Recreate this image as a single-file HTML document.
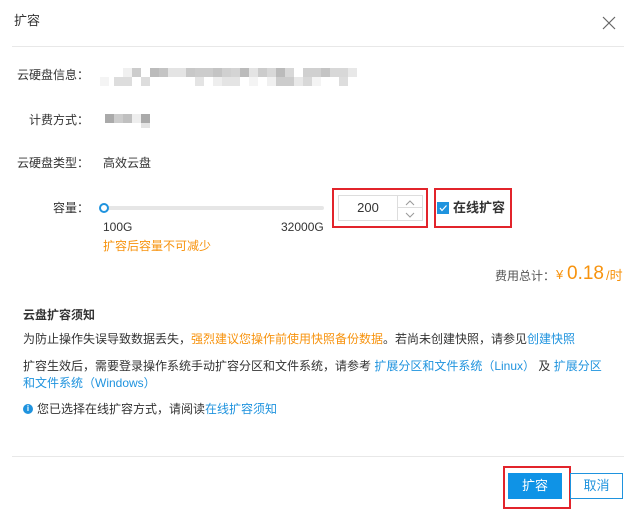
<!DOCTYPE html>
<html><head><meta charset="utf-8"><style>
*{margin:0;padding:0;box-sizing:border-box}
body{width:636px;height:514px;background:#fff;position:relative;overflow:hidden;font-family:"Liberation Sans","Noto Sans CJK SC",sans-serif;font-size:12px;color:#333}
.a{position:absolute;white-space:nowrap;line-height:16px}
.lbl{text-align:right;width:89px;left:0;color:#333}
.px{position:absolute;width:9px;height:9px}
.o{color:#f7930e}.b{color:#1f93de}
</style></head><body>
<div class="a" style="left:14px;top:13px;font-size:13px">扩容</div>
<svg class="a" style="left:602px;top:16px" width="14" height="14" viewBox="0 0 14 14"><path d="M1 1L13 13M13 1L1 13" stroke="#666" stroke-width="1.2"/></svg>
<div class="a" style="left:12px;top:46px;width:612px;height:1px;background:#e8e8e8"></div>

<div class="a lbl" style="top:67px">云硬盘信息：</div>
<div class="px" style="left:123px;top:68px;background:#f0f0f0"></div><div class="px" style="left:132px;top:68px;background:#ccc"></div><div class="px" style="left:150px;top:68px;background:#bbb"></div><div class="px" style="left:159px;top:68px;background:#c4c4c4"></div><div class="px" style="left:168px;top:68px;background:#e4e4e4"></div><div class="px" style="left:177px;top:68px;background:#e4e4e4"></div><div class="px" style="left:186px;top:68px;background:#c8c8c8"></div><div class="px" style="left:195px;top:68px;background:#ccc"></div><div class="px" style="left:204px;top:68px;background:#ccc"></div><div class="px" style="left:213px;top:68px;background:#c4c4c4"></div><div class="px" style="left:222px;top:68px;background:#d0d0d0"></div><div class="px" style="left:231px;top:68px;background:#d4d4d4"></div><div class="px" style="left:240px;top:68px;background:#bbb"></div><div class="px" style="left:249px;top:68px;background:#e4e4e4"></div><div class="px" style="left:258px;top:68px;background:#ccc"></div><div class="px" style="left:267px;top:68px;background:#d8d8d8"></div><div class="px" style="left:276px;top:68px;background:#bbb"></div><div class="px" style="left:285px;top:68px;background:#d8d8d8"></div><div class="px" style="left:303px;top:68px;background:#d0d0d0"></div><div class="px" style="left:312px;top:68px;background:#d0d0d0"></div><div class="px" style="left:321px;top:68px;background:#c4c4c4"></div><div class="px" style="left:330px;top:68px;background:#d8d8d8"></div><div class="px" style="left:339px;top:68px;background:#d8d8d8"></div><div class="px" style="left:348px;top:68px;background:#e8e8e8"></div>
<div class="px" style="left:100px;top:77px;background:#f4f4f4"></div><div class="px" style="left:114px;top:77px;background:#ddd"></div><div class="px" style="left:123px;top:77px;background:#ddd"></div><div class="px" style="left:141px;top:77px;background:#ddd"></div><div class="px" style="left:195px;top:77px;background:#e4e4e4"></div><div class="px" style="left:213px;top:77px;background:#eee"></div><div class="px" style="left:222px;top:77px;background:#e4e4e4"></div><div class="px" style="left:231px;top:77px;background:#e4e4e4"></div><div class="px" style="left:249px;top:77px;background:#f4f4f4"></div><div class="px" style="left:267px;top:77px;background:#f0f0f0"></div><div class="px" style="left:276px;top:77px;background:#ccc"></div><div class="px" style="left:285px;top:77px;background:#ccc"></div><div class="px" style="left:294px;top:77px;background:#e8e8e8"></div><div class="px" style="left:303px;top:77px;background:#d8d8d8"></div><div class="px" style="left:312px;top:77px;background:#f4f4f4"></div><div class="px" style="left:339px;top:77px;background:#ddd"></div>

<div class="a lbl" style="top:112px">计费方式：</div>
<div class="px" style="left:105px;top:114px;background:#aaa"></div><div class="px" style="left:114px;top:114px;background:#ccc"></div><div class="px" style="left:123px;top:114px;background:#c0c0c0"></div><div class="px" style="left:132px;top:114px;background:#eee"></div><div class="px" style="left:141px;top:114px;background:#aaa"></div><div class="px" style="left:141px;top:123px;height:5px;background:#e4e4e4"></div>

<div class="a lbl" style="top:155px">云硬盘类型：</div>
<div class="a" style="left:103px;top:155px">高效云盘</div>

<div class="a lbl" style="top:200px">容量：</div>
<div class="a" style="left:104px;top:206px;width:220px;height:4px;background:#e6e6e6;border-radius:2px"></div>
<div class="a" style="left:99px;top:203px;width:10px;height:10px;border:2px solid #1f93de;border-radius:50%;background:#fff"></div>
<div class="a" style="left:103px;top:219px">100G</div>
<div class="a" style="left:281px;top:219px">32000G</div>
<div class="a o" style="left:103px;top:238px">扩容后容量不可减少</div>

<div class="a" style="left:332px;top:188px;width:96px;height:40px;border:2px solid #e2242b"></div>
<div class="a" style="left:338px;top:195px;width:85px;height:26px;border:1px solid #ddd"></div>
<div class="a" style="left:339px;top:200px;width:58px;text-align:center;font-size:13px">200</div>
<div class="a" style="left:397px;top:196px;width:1px;height:24px;background:#ddd"></div>
<div class="a" style="left:398px;top:207px;width:24px;height:1px;background:#ddd"></div>
<svg class="a" style="left:405px;top:199px" width="10" height="20" viewBox="0 0 10 20"><path d="M1 6L5 2L9 6M1 14L5 18L9 14" stroke="#999" fill="none"/></svg>

<div class="a" style="left:434px;top:188px;width:78px;height:40px;border:2px solid #e2242b"></div>
<div class="a" style="left:437px;top:202px;width:12px;height:12px;background:#1f93de"></div>
<svg class="a" style="left:437px;top:202px" width="12" height="12"><path d="M3 6L5 8.5L9.5 3.5" stroke="#fff" fill="none" stroke-width="1.2"/></svg>
<div class="a" style="left:453px;top:200px;font-weight:bold;font-size:13px">在线扩容</div>

<div class="a" style="left:495px;top:268px;color:#555">费用总计：</div>
<div class="a o" style="left:556px;top:267px;font-size:13px">¥</div>
<div class="a o" style="left:567px;top:263px;font-size:19px;line-height:22px">0.18</div>
<div class="a o" style="left:606px;top:268px;font-size:13px">/时</div>

<div class="a" style="left:23px;top:307px;font-weight:bold">云盘扩容须知</div>
<div class="a" style="left:23px;top:331px">为防止操作失误导致数据丢失，<span class="o">强烈建议您操作前使用快照备份数据</span>。若尚未创建快照，请参见<span class="b">创建快照</span></div>
<div class="a" style="left:23px;top:358px">扩容生效后，需要登录操作系统手动扩容分区和文件系统，请参考 <span class="b">扩展分区和文件系统（Linux）</span> 及 <span class="b">扩展分区</span></div>
<div class="a b" style="left:23px;top:375px">和文件系统（Windows）</div>
<div class="a" style="left:23px;top:404px;width:10px;height:10px;border-radius:50%;background:#1f93de;color:#fff;font-size:8px;line-height:10px;text-align:center;font-weight:bold">i</div>
<div class="a" style="left:37px;top:401px">您已选择在线扩容方式，请阅读<span class="b">在线扩容须知</span></div>

<div class="a" style="left:12px;top:456px;width:612px;height:1px;background:#e8e8e8"></div>
<div class="a" style="left:503px;top:466px;width:68px;height:43px;border:2px solid #e2242b"></div>
<div class="a" style="left:508px;top:473px;width:54px;height:26px;background:#0f93e6;color:#fff;text-align:center;line-height:26px;font-size:13px">扩容</div>
<div class="a" style="left:570px;top:473px;width:53px;height:26px;border:1px solid #1f93de;color:#1f93de;text-align:center;line-height:24px;font-size:13px">取消</div>
</body></html>
